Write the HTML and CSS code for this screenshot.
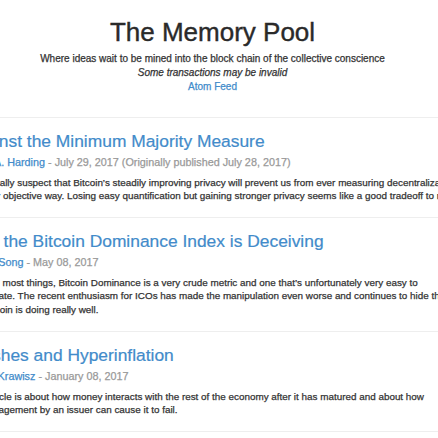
FILE: index.html
```html
<!DOCTYPE html>
<html lang="en">
<head>
<meta charset="utf-8">
<title>The Memory Pool</title>
<link rel="stylesheet" href="styles.css">
</head>
<body>
<div class="page">
  <header class="masthead">
    <h1 class="site-title">The Memory Pool</h1>
    <p class="tagline">Where ideas wait to be mined into the block chain of the collective conscience</p>
    <p class="disclaimer">Some transactions may be invalid</p>
    <a class="feed" href="#">Atom Feed</a>
  </header>
  <main class="posts">
    <article class="post">
      <h2 class="post-title"><a href="#">Against the Minimum Majority Measure</a></h2>
      <p class="post-meta"><a href="#">David A. Harding</a> - July 29, 2017 (Originally published July 28, 2017)</p>
      <p class="post-summary">I personally suspect that Bitcoin’s steadily improving privacy will prevent us from ever measuring decentralization with any objective way. Losing easy quantification but gaining stronger privacy seems like a good tradeoff to me.</p>
    </article>
    <article class="post">
      <h2 class="post-title"><a href="#">Why the Bitcoin Dominance Index is Deceiving</a></h2>
      <p class="post-meta"><a href="#">Jimmy Song</a> - May 08, 2017</p>
      <p class="post-summary">Just like most things, Bitcoin Dominance is a very crude metric and one that’s unfortunately very easy to manipulate. The recent enthusiasm for ICOs has made the manipulation even worse and continues to hide the fact that Bitcoin is doing really well.</p>
    </article>
    <article class="post">
      <h2 class="post-title"><a href="#">Crashes and Hyperinflation</a></h2>
      <p class="post-meta"><a href="#">Daniel Krawisz</a> - January 08, 2017</p>
      <p class="post-summary">This article is about how money interacts with the rest of the economy after it has matured and about how mismanagement by an issuer can cause it to fail.</p>
    </article>
  </main>
</div>
</body>
</html>
```

FILE: styles.css
```css
html, body {
  margin: 0;
  padding: 0;
  background: #fff;
}

body {
  font-family: "Liberation Sans", Arial, Helvetica, sans-serif;
  color: #333;
  overflow: hidden;
}

a {
  color: #428bca;
  text-decoration: none;
}

.page {
  width: 504px;
  margin-left: -36px;
}

.masthead {
  text-align: center;
  padding: 17px 7px 23px 0;
  border-bottom: 1px solid #eee;
}

.site-title {
  margin: 0 0 5px;
  font-size: 26px;
  line-height: 30px;
  font-weight: normal;
  color: #2a2a2a;
  -webkit-text-stroke: 0.4px #2a2a2a;
}

.tagline,
.disclaimer,
.feed,
.post-meta,
.post-summary {
  -webkit-text-stroke: 0.25px currentColor;
}

.tagline,
.disclaimer {
  margin: 0;
  font-size: 10px;
  line-height: 14px;
}

.disclaimer {
  font-style: italic;
}

.feed {
  display: block;
  font-size: 10px;
  line-height: 14px;
}

.post {
  padding: 13px 0 15px;
  border-bottom: 1px solid #eee;
}

.post-title {
  margin: 0 0 3.5px;
  font-size: 17.4px;
  line-height: 20px;
  font-weight: normal;
  -webkit-text-stroke: 0.2px #428bca;
}

.post-meta {
  margin: 0 0 7px;
  font-size: 10.8px;
  line-height: 14px;
  color: #999;
}

.post-summary {
  margin: 0;
  font-size: 9.9px;
  line-height: 13.4px;
}
```
